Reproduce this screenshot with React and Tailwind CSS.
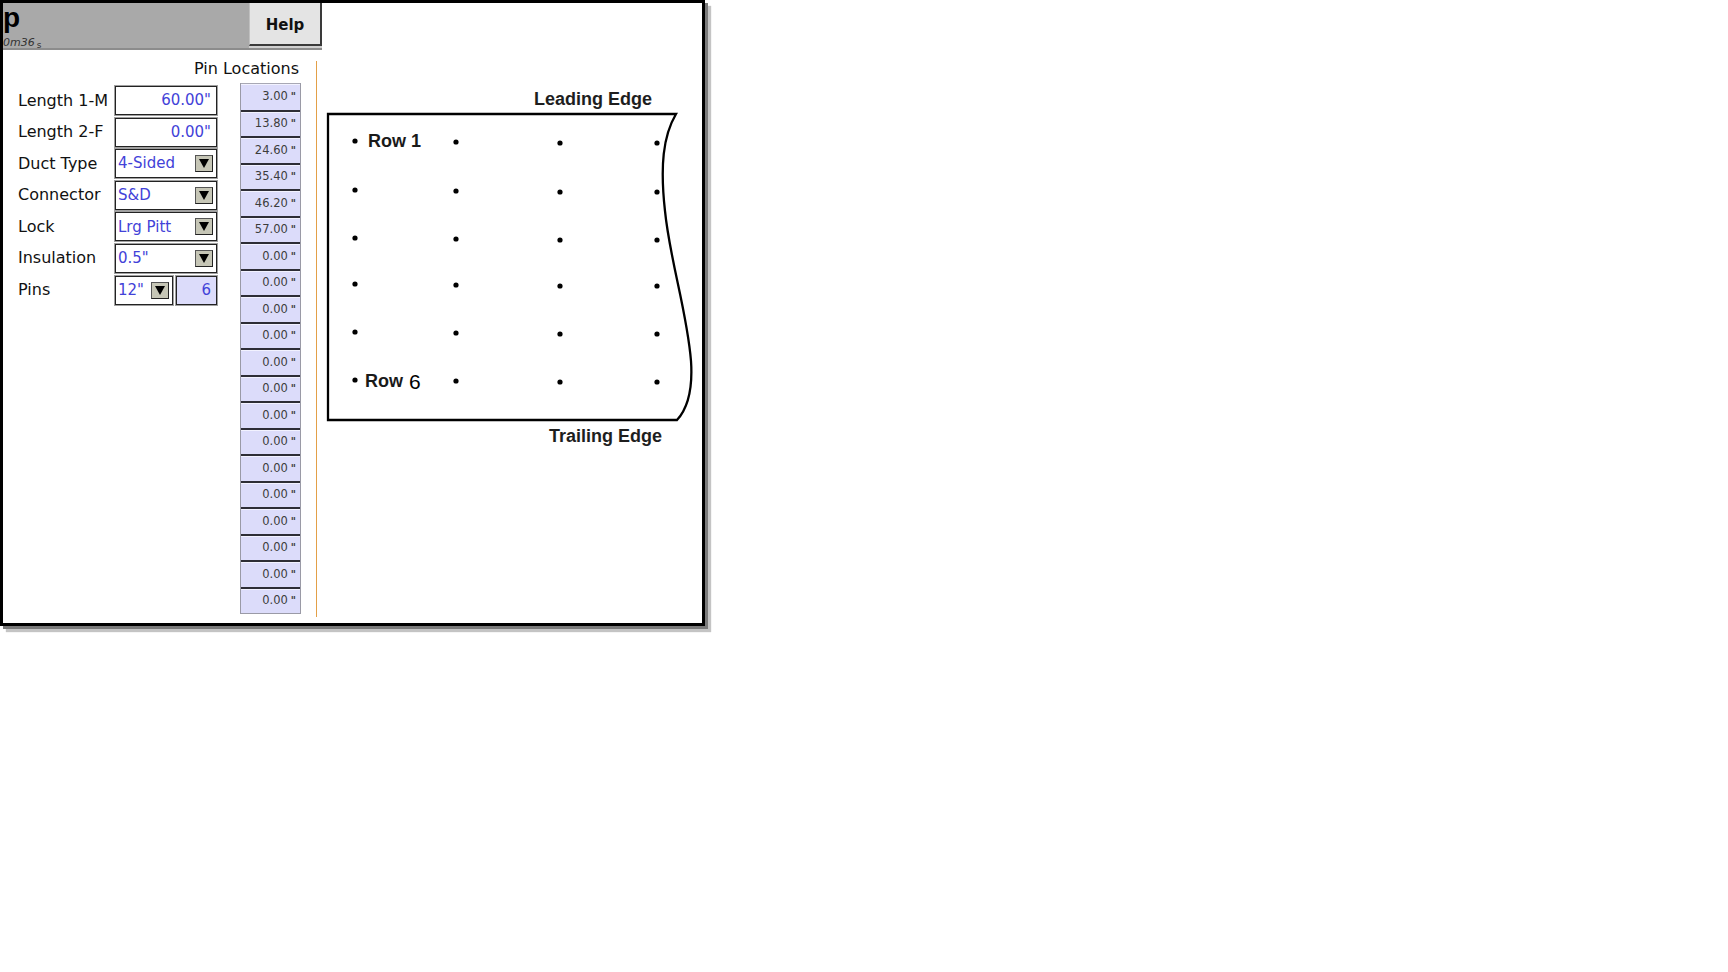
import React from "react";

const fields = [
  { label: "Length 1-M", value: '60.00"', kind: "input" },
  { label: "Length 2-F", value: '0.00"', kind: "input" },
  { label: "Duct Type", value: "4-Sided", kind: "select" },
  { label: "Connector", value: "S&D", kind: "select" },
  { label: "Lock", value: "Lrg Pitt", kind: "select" },
  { label: "Insulation", value: '0.5"', kind: "select" },
];

const pins = ["3.00", "13.80", "24.60", "35.40", "46.20", "57.00"].concat(
  Array(14).fill("0.00")
);

const dotCols = [30, 131, 235, 332];
const dotRows = [30, 79, 127, 173, 221, 269];

function Arrow() {
  return (
    <div className="w-[18px] h-[17px] bg-[#c6c6b6] border border-[#555] border-r-[#222] border-b-[#222] flex items-center justify-center">
      <svg width="10" height="9" viewBox="0 0 10 9">
        <polygon points="0,0 10,0 5,9" fill="#000" />
      </svg>
    </div>
  );
}

function Field({ kind, value, className = "" }) {
  const box =
    "h-[29px] border border-[#222] shadow-[0_0_0_1px_#a0a0a0] flex items-center text-[15px] text-[#4242d8] " +
    className;
  if (kind === "select") {
    return (
      <div className={box + " bg-white justify-between pl-[2px] pr-[3px]"}>
        <span>{value}</span>
        <Arrow />
      </div>
    );
  }
  return <div className={box + " bg-white justify-end pr-[5px]"}>{value}</div>;
}

function DuctDiagram() {
  return (
    <div className="relative w-[372px] h-[312px]">
      <svg width="372" height="312" viewBox="0 0 372 312" className="block">
        <path
          d="M3,3 H351 C338,25 335,55 340,100 C345,150 362,200 366,250 C368,280 362,298 352,309 H3 Z"
          fill="none"
          stroke="#000"
          strokeWidth="2.3"
        />
        {dotRows.map((y, r) =>
          dotCols.map((x, c) => (
            <circle key={r + "-" + c} cx={x} cy={y + (c > 1 ? 2 : c)} r="2.6" fill="#000" />
          ))
        )}
      </svg>
      <div className="absolute left-[43px] top-[20px] text-[18px] leading-[20px] font-bold text-[#1a1a1a]">
        Row 1
      </div>
      <div className="absolute left-[40px] top-[259px] flex items-baseline leading-[20px] text-[#1a1a1a]">
        <span className="text-[18px] font-bold">Row</span>
        <span className="text-[21px] ml-[6px] text-black relative top-[2px]">6</span>
      </div>
    </div>
  );
}

export default function App() {
  return (
    <div className="w-[1728px] h-[972px] bg-white" style={{ fontFamily: '"DejaVu Sans", sans-serif' }}>
      <div className="w-[705px] h-[626px] border-[3px] border-black bg-white flex flex-col shadow-[3px_3px_0_#7a7a7a,6px_6px_1px_#c4c4c4]">
        {/* top bar */}
        <div className="flex h-[47px] shrink-0">
          <div className="w-[246px] bg-[#a9a9a9] border-b-2 border-[#8c8c8c] flex flex-col">
            <div
              className="text-[28px] font-bold leading-[26px] mt-[2px] text-black"
              style={{ fontFamily: '"Liberation Sans", Arial, sans-serif' }}
            >
              p
            </div>
            <div className="text-[11px] italic text-[#333] mt-[6px] leading-[12px]">
              0m36<span className="text-[9px] not-italic relative top-[2px] ml-[2px]">s</span>
            </div>
          </div>
          <div className="w-[73px] flex flex-col">
            <div className="h-[43px] pt-[3px] bg-[#e4e4e4] border-l border-[#c0c0c0] border-r-2 border-r-[#3a3a3a] border-b-2 border-b-[#3a3a3a] flex items-center justify-center text-[15px] font-bold text-[#111]">
              Help
            </div>
            <div className="flex-1 bg-[#d0d0d0] border-b-2 border-[#8c8c8c]" />
          </div>
          <div className="flex-1" />
        </div>

        {/* body */}
        <div className="flex flex-1">
          <div className="w-[313px] flex flex-col">
            <div className="pt-[10px] pr-[17px] text-right text-[16px] leading-[18px] text-[#111]">
              Pin Locations
            </div>
            <div className="flex mt-[5px]">
              <div className="flex flex-col gap-[2.6px] pl-[15px] pt-[3px]">
                {fields.map((f) => (
                  <div key={f.label} className="flex items-center">
                    <div className="w-[97px] text-[16px] text-[#111]">{f.label}</div>
                    <Field kind={f.kind} value={f.value} className="w-[102px]" />
                  </div>
                ))}
                <div className="flex items-center">
                  <div className="w-[97px] text-[16px] text-[#111]">Pins</div>
                  <Field kind="select" value={'12"'} className="w-[58px]" />
                  <div className="ml-[3px] w-[41px] h-[29px] border border-[#222] shadow-[0_0_0_1px_#a0a0a0] bg-[#dcdcfa] flex items-center justify-end pr-[5px] text-[15px] text-[#4242d8]">
                    6
                  </div>
                </div>
              </div>
              <div className="ml-[23px] w-[61px] flex flex-col border-x border-b border-[#9a9aa6]">
                {pins.map((p, i) => (
                  <div
                    key={i}
                    className={
                      "h-[26.5px] bg-[#dcdcfa] flex items-center justify-end pr-[4px] text-[11.5px] text-[#3c3c3c] shadow-[inset_0_1px_0_#f2f2ff] " +
                      (i === 0 ? "border-t border-[#a8a8b4]" : "border-t-2 border-[#2e2e36]")
                    }
                  >
                    {p}
                    <span className="ml-[3px] text-[10px] font-bold">"</span>
                  </div>
                ))}
              </div>
            </div>
          </div>

          <div className="w-px h-[556px] mt-[11px] bg-[#e3a048]" />

          <div
            className="flex-1 flex flex-col pl-[8px] pt-[39px]"
            style={{ fontFamily: '"Liberation Sans", Arial, sans-serif' }}
          >
            <div className="w-[372px] text-right pr-[45px] text-[18px] leading-[20px] font-bold text-[#1e1e1e]">
              Leading Edge
            </div>
            <div className="mt-[2px]">
              <DuctDiagram />
            </div>
            <div className="w-[372px] text-right pr-[35px] mt-[3px] text-[18px] leading-[20px] font-bold text-[#1e1e1e]">
              Trailing Edge
            </div>
          </div>
        </div>
      </div>
    </div>
  );
}
